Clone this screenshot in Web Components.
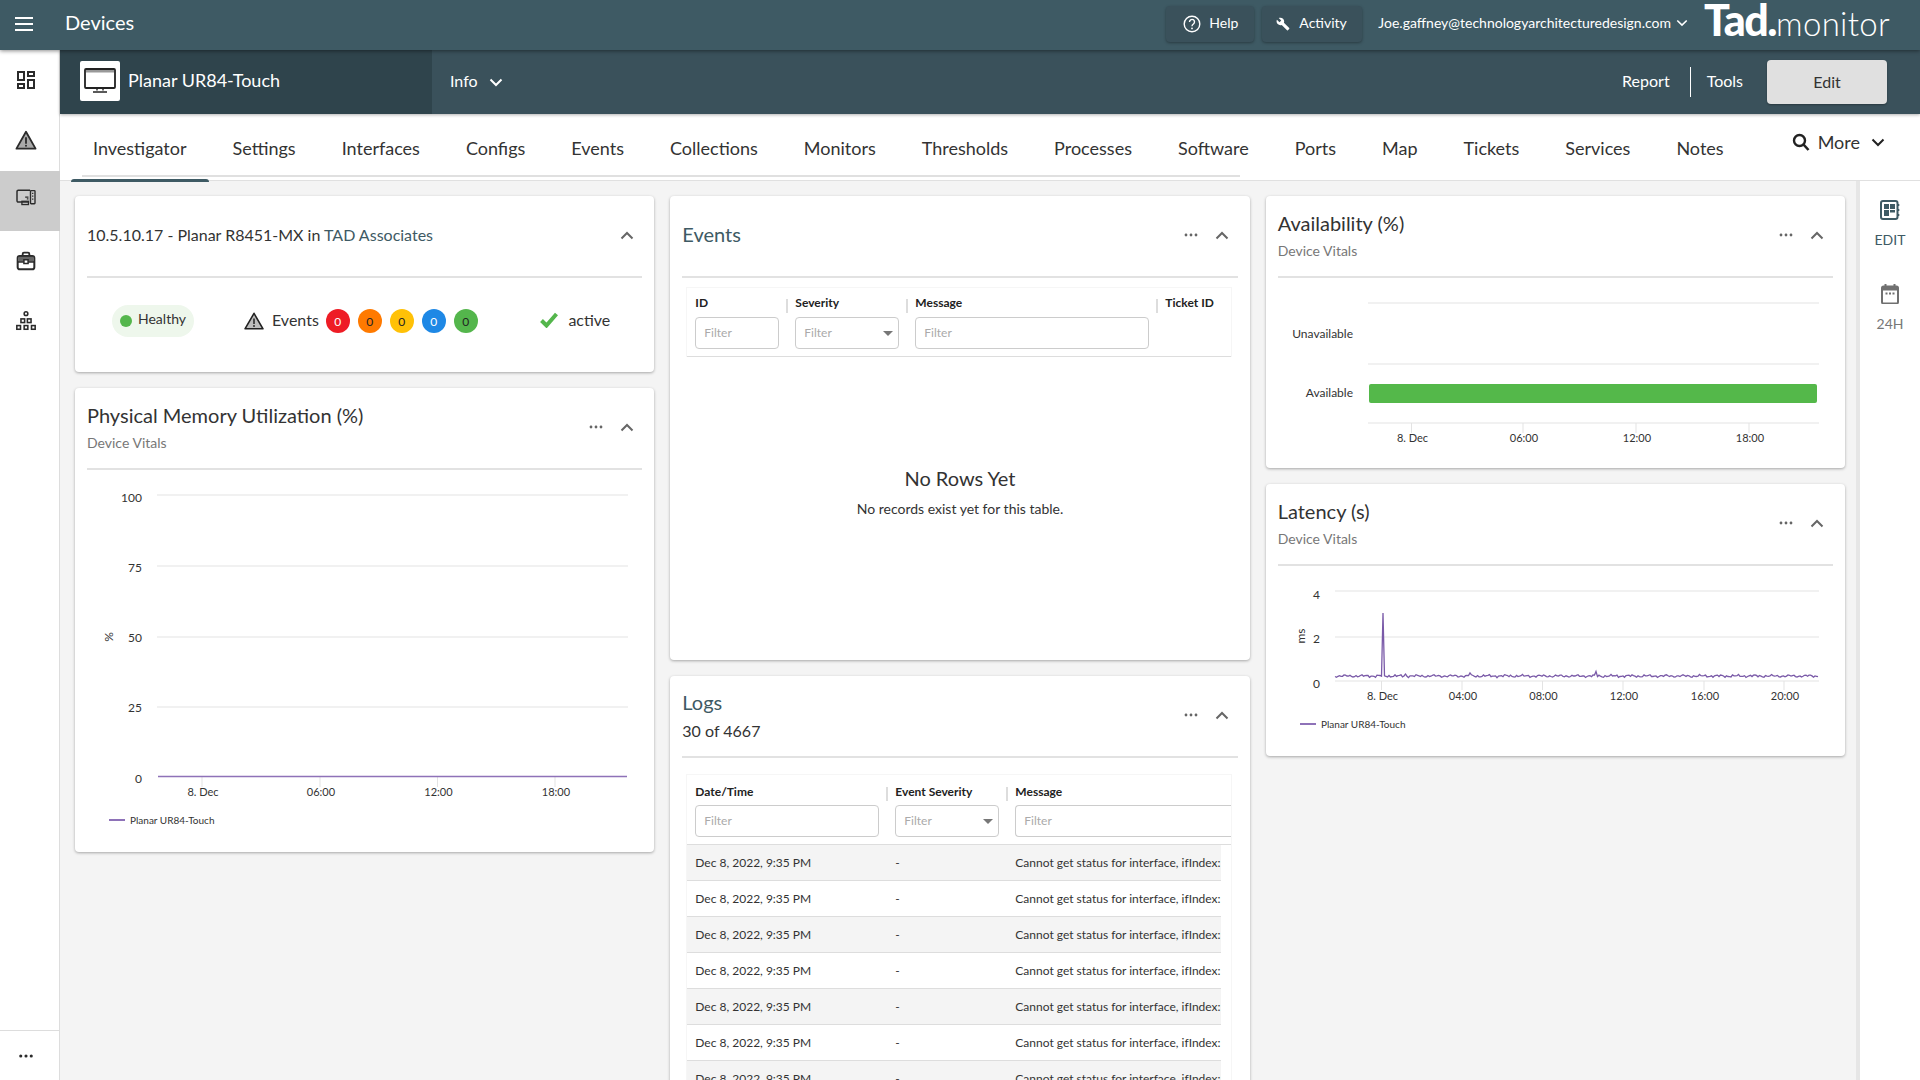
<!DOCTYPE html>
<html lang="en"><head><meta charset="utf-8"><title>Devices</title>
<style>
html,body{margin:0;padding:0;height:1080px;overflow:hidden;background:#f4f4f4;font-family:"Lato","Liberation Sans",sans-serif;color:#333}
#shell{display:flex;flex-direction:column;height:1080px;overflow:hidden}
#below{display:flex;flex:1;min-height:0}
#mainarea{display:flex;flex-direction:column;flex:1;min-width:0}
#work{display:flex;flex:1;min-height:0}
a{color:#3e5a64;text-decoration:none}
</style></head>
<body>
<div id="shell">
  <tm-topbar></tm-topbar>
  <div id="below">
    <tm-sidebar></tm-sidebar>
    <div id="mainarea">
      <tm-subheader></tm-subheader>
      <tm-tabs>
        <tm-tab active>Investigator</tm-tab><tm-tab>Settings</tm-tab><tm-tab>Interfaces</tm-tab><tm-tab>Configs</tm-tab><tm-tab>Events</tm-tab><tm-tab>Collections</tm-tab><tm-tab>Monitors</tm-tab><tm-tab>Thresholds</tm-tab><tm-tab>Processes</tm-tab><tm-tab>Software</tm-tab><tm-tab>Ports</tm-tab><tm-tab>Map</tm-tab><tm-tab>Tickets</tm-tab><tm-tab>Services</tm-tab><tm-tab>Notes</tm-tab>
      </tm-tabs>
      <div id="work">
        <tm-columns>
          <tm-column>
            <tm-card style="height:176px" plain>
              <span slot="title" style="font-size:16px;color:#333">10.5.10.17 - Planar R8451-MX in <a>TAD Associates</a></span>
              <tm-status></tm-status>
            </tm-card>
            <tm-card style="height:464px">
              <span slot="title">Physical Memory Utilization (%)</span><span slot="sub">Device Vitals</span>
              <tm-chart kind="memory"></tm-chart>
            </tm-card>
          </tm-column>
          <tm-column>
            <tm-card style="height:464px" accent>
              <span slot="title">Events</span>
              <tm-table kind="events"></tm-table>
              <tm-empty></tm-empty>
            </tm-card>
            <tm-card style="height:464px" accent>
              <span slot="title">Logs</span><span slot="sub" style="color:#333;font-size:16px;display:block;margin:1px 0 1px">30 of 4667</span>
              <tm-table kind="logs"></tm-table>
            </tm-card>
          </tm-column>
          <tm-column>
            <tm-card style="height:272px">
              <span slot="title">Availability (%)</span><span slot="sub">Device Vitals</span>
              <tm-chart kind="availability"></tm-chart>
            </tm-card>
            <tm-card style="height:272px">
              <span slot="title">Latency (s)</span><span slot="sub">Device Vitals</span>
              <tm-chart kind="latency"></tm-chart>
            </tm-card>
          </tm-column>
        </tm-columns>
        <tm-rail></tm-rail>
      </div>
    </div>
  </div>
</div>
<script>
function shadow(el, html){ el.attachShadow({mode:'open'}).innerHTML = html; }
const chev = (c,w=2)=>`<svg width="14" height="9" viewBox="0 0 14 9"><path d="M1.5 1.5 7 7l5.5-5.5" fill="none" stroke="${c}" stroke-width="${w}"/></svg>`;
const chevUp = (c,w=2)=>`<svg width="14" height="9" viewBox="0 0 14 9"><path d="M1.5 7.5 7 2l5.5 5.5" fill="none" stroke="${c}" stroke-width="${w}"/></svg>`;

customElements.define('tm-topbar', class extends HTMLElement{ connectedCallback(){ shadow(this,`
<style>
:host{display:flex;align-items:center;height:50px;background:#3e5a64;color:#fff;position:relative;z-index:3;box-shadow:0 1px 4px rgba(0,0,0,.45);flex:none}
.burger{width:18px;margin:-2px 0 0 15px;display:flex;flex-direction:column;gap:4px}
.burger i{display:block;height:2px;background:#fff}
.name{font-size:20px;margin-left:32px;padding-bottom:6px}
.right{margin-left:auto;display:flex;align-items:center}
.btn{display:flex;align-items:center;height:36px;box-sizing:border-box;background:#3a515b;border-radius:4px;box-shadow:0 1px 3px rgba(0,0,0,.35);font-size:14px;gap:8px;margin:-2px 8px 0 0}
.btn span{padding-bottom:4px}
.help{width:88px;padding-left:17px}
.act{width:100px;padding-left:14px;margin-right:16px;gap:9px}
.mail{font-size:14px;white-space:nowrap;padding-bottom:6px}
.dd{margin:-4px 16px 0 5px;display:flex}
.logo{display:flex;align-items:baseline;margin-right:30px;line-height:1;height:42px;margin-top:-12px}
.tad{font-size:43px;font-weight:900;letter-spacing:-1.5px}
.mon{font-size:33px;font-weight:300;letter-spacing:.3px}
</style>
<div class="burger"><i></i><i></i><i></i></div>
<div class="name">Devices</div>
<div class="right">
 <div class="btn help"><svg width="18" height="18" viewBox="0 0 18 18"><circle cx="9" cy="9" r="7.8" fill="none" stroke="#fff" stroke-width="1.4"/><path d="M6.5 7a2.5 2.5 0 1 1 3.9 2c-.9.6-1.4 1-1.4 2.2" fill="none" stroke="#fff" stroke-width="1.4"/><circle cx="9" cy="13.4" r=".9" fill="#fff"/></svg><span>Help</span></div>
 <div class="btn act"><svg width="14" height="14" viewBox="0 0 24 24"><path fill="#fff" d="M22.7,19L13.6,9.9C14.5,7.6 14,4.9 12.1,3C10.1,1 7.1,0.6 4.7,1.7L9,6L6,9L1.6,4.7C0.4,7.1 0.9,10.1 2.9,12.1C4.8,14 7.5,14.5 9.8,13.6L18.9,22.7C19.3,23.1 19.9,23.1 20.3,22.7L22.6,20.4C23.1,20 23.1,19.3 22.7,19Z"/></svg><span>Activity</span></div>
 <div class="mail">Joe.gaffney@technologyarchitecturedesign.com</div>
 <div class="dd">${chev('#fff',1.8).replace('width="14" height="9"','width="12" height="8"')}</div>
 <div class="logo"><span class="tad">Tad.</span><span class="mon">monitor</span></div>
</div>`);}});

customElements.define('tm-sidebar', class extends HTMLElement{ connectedCallback(){ const d='#2b2b2b'; shadow(this,`
<style>
:host{display:flex;flex-direction:column;width:60px;box-sizing:border-box;background:#fff;border-right:1px solid #ddd;flex:none;height:1030px}
.i{height:60px;display:flex;align-items:center;justify-content:center;padding-right:8px;box-sizing:border-box}
.on{background:#ccc;margin:1px -1px 0 0;padding:0 9px 6px 0}
.more{margin-top:auto;height:50px;border-top:1px solid #ddd;padding-right:7px}
</style>
<div class="i"><svg width="24" height="24" viewBox="0 0 24 24"><path fill="${d}" d="M19,5V7H15V5H19M9,5V11H5V5H9M19,13V19H15V13H19M9,17V19H5V17H9M21,3H13V9H21V3M11,3H3V13H11V3M21,11H13V21H21V11M11,15H3V21H11V15Z"/></svg></div>
<div class="i"><svg width="22" height="20" viewBox="0 0 24 22"><path d="M12 2 22.5 20.5H1.5Z" fill="#a9a9a9" stroke="${d}" stroke-width="2" stroke-linejoin="round"/><path d="M12 8v7" stroke="${d}" stroke-width="2"/><circle cx="12" cy="17.4" r="1.1" fill="${d}"/></svg></div>
<div class="i on"><svg width="20" height="18" viewBox="0 0 24 22"><path d="M15 16H2.5a1.5 1.5 0 0 1-1.5-1.5V3A1.5 1.5 0 0 1 2.5 1.5H17" fill="none" stroke="${d}" stroke-width="1.8"/><rect x="17.5" y="2" width="5.5" height="16" rx=".8" fill="none" stroke="${d}" stroke-width="1.7"/><path d="M20.2 4.5v1.5M20.2 8v1.5M20.2 11.5v1.5" stroke="${d}" stroke-width="1.6"/><rect x="7" y="15" width="8" height="4" fill="none" stroke="${d}" stroke-width="1.6"/><path d="M11 10h4M13 12h2" stroke="${d}" stroke-width="1.4"/></svg></div>
<div class="i"><svg width="20" height="20" viewBox="0 0 24 24"><path d="M8 6V3.5A1.5 1.5 0 0 1 9.5 2h5A1.5 1.5 0 0 1 16 3.5V6" fill="none" stroke="${d}" stroke-width="2.2"/><rect x="2" y="6" width="20" height="16" rx="2.5" fill="none" stroke="${d}" stroke-width="2.4"/><path d="M2 13h20" stroke="${d}" stroke-width="2.2"/><rect x="3" y="7" width="18" height="5.5" fill="#666"/><rect x="9.5" y="10.5" width="5" height="4.5" fill="#fff" stroke="${d}" stroke-width="1.8"/></svg></div>
<div class="i"><svg width="22" height="22" viewBox="0 0 24 24"><g fill="none" stroke="${d}" stroke-width="1.7"><circle cx="12" cy="4" r="2"/><rect x="6.5" y="9.7" width="4" height="4"/><rect x="13.5" y="9.7" width="4" height="4"/><rect x="2" y="17" width="4" height="4"/><rect x="10" y="17" width="4" height="4"/><rect x="18" y="17" width="4" height="4"/></g></svg></div>
<div class="i more"><svg width="14" height="4" viewBox="0 0 16 4"><circle cx="2" cy="2" r="1.8" fill="${d}"/><circle cx="8" cy="2" r="1.8" fill="${d}"/><circle cx="14" cy="2" r="1.8" fill="${d}"/></svg></div>`);}});

customElements.define('tm-subheader', class extends HTMLElement{ connectedCallback(){ shadow(this,`
<style>
:host{display:flex;align-items:center;height:64px;background:#3a515b;color:#fff;flex:none;position:relative;z-index:2;box-shadow:0 1px 3px rgba(0,0,0,.3)}
.id{width:372px;height:64px;box-sizing:border-box;background:#2f444c;display:flex;align-items:center;padding-left:20px;gap:8px;font-size:18px;padding-bottom:2px}
.id span{padding-bottom:3px}
.box{width:40px;height:40px;background:#fff;border-radius:2px;display:flex;align-items:center;justify-content:center}
.info{margin-left:18px;font-size:16px;display:flex;align-items:center;gap:11px}
.info span{padding-bottom:4px}
.r{margin-left:auto;display:flex;align-items:center;font-size:16px}
.r>span{padding-bottom:4px}
.sep{width:1px;height:30px;background:#fff;margin:0 16px 0 20px}
.edit{margin:0 33px 0 24px;width:120px;height:44px;padding-bottom:2px;box-sizing:border-box;background:#e0e0e0;color:#333;border-radius:4px;display:flex;align-items:center;justify-content:center;box-shadow:0 1px 2px rgba(0,0,0,.3)}
</style>
<div class="id"><div class="box"><svg width="32" height="26" viewBox="0 0 32 26"><rect x="1" y="1" width="30" height="19" rx="1" fill="#fff" stroke="#222" stroke-width="1.8"/><rect x="2" y="2" width="28" height="2.5" fill="#999"/><path d="M13 20.5v2M19 20.5v2" stroke="#222" stroke-width="1.4"/><path d="M9 24h14" stroke="#222" stroke-width="1.5"/></svg></div><span>Planar UR84-Touch</span></div>
<div class="info"><span>Info</span> ${chev('#fff')}</div>
<div class="r"><span>Report</span><i class="sep"></i><span>Tools</span><div class="edit">Edit</div></div>`);}});

customElements.define('tm-tabs', class extends HTMLElement{ connectedCallback(){ shadow(this,`
<style>
:host{display:flex;height:67px;box-sizing:border-box;background:#fff;border-bottom:1px solid #e0e0e0;flex:none;position:relative}
.track{box-sizing:border-box;width:1158px;height:63px;margin-left:22px;border-bottom:2px solid #e0e0e0;display:flex;flex:none}
.inner{display:flex;gap:2px;margin-left:-11px}
.more{margin-left:auto;margin-right:35px;display:flex;align-items:center;height:56px;gap:8px;font-size:18px;color:#333}
</style>
<div class="track"><div class="inner"><slot></slot></div></div>
<div class="more"><svg width="18" height="18" viewBox="0 0 18 18"><circle cx="7.5" cy="7.5" r="5.5" fill="none" stroke="#222" stroke-width="2.4"/><path d="M11.5 11.5 16.5 17" stroke="#222" stroke-width="2.6"/></svg><span>More</span><span style="margin-left:3px;display:flex">${chev('#222')}</span></div>`);}});

customElements.define('tm-tab', class extends HTMLElement{ connectedCallback(){ shadow(this,`
<style>
:host{display:block;position:relative;padding:23px 22px 0;font-size:18px;line-height:22px;white-space:nowrap;color:#333;height:38px;flex:none}
:host([active])::after{content:"";position:absolute;left:0;right:0;bottom:-7px;height:3px;background:#3e5a64;border-radius:3px 3px 0 0}
</style><slot></slot>`);}});

customElements.define('tm-columns', class extends HTMLElement{ connectedCallback(){ shadow(this,`
<style>
:host{display:grid;grid-template-columns:repeat(3,1fr);column-gap:16px;flex:1;min-width:0;padding:15px 11px 0 15px;align-items:start;overflow:hidden;box-sizing:border-box;border-right:4px solid #e6e6e6}
</style><slot></slot>`);}});

customElements.define('tm-column', class extends HTMLElement{ connectedCallback(){ shadow(this,`
<style>:host{display:flex;flex-direction:column;gap:16px;min-width:0}</style><slot></slot>`);}});

customElements.define('tm-card', class extends HTMLElement{ connectedCallback(){ shadow(this,`
<style>
:host{display:flex;flex-direction:column;flex:none;background:#fff;border-radius:4px;box-shadow:0 1px 3px rgba(0,0,0,.32);box-sizing:border-box;overflow:hidden}
.h{flex:none;height:82px;box-sizing:border-box;margin:0 12px;border-bottom:2px solid #e2e2e2;display:flex;align-items:center}
.t{flex:1;min-width:0;display:flex;flex-direction:column;gap:5px}
.tt{font-size:20px;line-height:24px;color:#333;margin:-2px 0 2px}
:host([accent]) .tt{color:#3e5a64}
.st{font-size:14px;line-height:18px;color:#777}
.a{display:flex;align-items:center;flex:none;margin-top:-2px}
.a span{width:31px;display:flex;justify-content:center}
.b{flex:1;min-height:0;position:relative;overflow:hidden}
</style>
<div class="h"><div class="t"><div class="tt"><slot name="title"></slot></div><div class="st"><slot name="sub"></slot></div></div>
<div class="a">${this.hasAttribute('plain')?'':'<span><svg width="14" height="4" viewBox="0 0 14 4"><circle cx="2" cy="2" r="1.4" fill="#666"/><circle cx="7" cy="2" r="1.4" fill="#666"/><circle cx="12" cy="2" r="1.4" fill="#666"/></svg></span>'}<span>${chevUp('#666')}</span></div></div>
<div class="b"><slot></slot></div>`);
 if(!this.querySelector('[slot=sub]')) this.shadowRoot.querySelector('.st').style.display='none';
}});

customElements.define('tm-status', class extends HTMLElement{ connectedCallback(){
 const dots=[['#ee1c25','#fff'],['#ff7a00','#222'],['#ffc107','#222'],['#1e88e5','#fff'],['#54b64c','#222']];
 shadow(this,`
<style>
:host{display:flex;align-items:center;height:94px;padding:0 44px 8px 37px;box-sizing:border-box;font-size:16px;color:#333}
.pill{display:flex;align-items:center;gap:6px;width:82px;height:32px;padding-left:8px;box-sizing:border-box;border-radius:16px;background:#eef7ec;font-size:14px}
.pill i{width:12px;height:12px;border-radius:50%;background:#54b64c}
.pill span{padding-bottom:5px}
.ev{display:flex;align-items:center;margin-left:50px}
.ev span{margin:0 7px 0 8px;padding-bottom:3px}
.ev b{display:flex;width:24px;height:24px;border-radius:50%;align-items:center;justify-content:center;font-size:12px;font-weight:400;margin-right:8px}
.ac{margin-left:auto;display:flex;align-items:center;gap:10px}
.ac svg{margin-bottom:2px}
.ac span{padding-bottom:3px}
</style>
<div class="pill"><i></i><span>Healthy</span></div>
<div class="ev"><svg width="20" height="18" viewBox="0 0 20 18"><path d="M10 1.3 19 16.8H1Z" fill="#bdbdbd" stroke="#222" stroke-width="1.6" stroke-linejoin="round"/><path d="M10 6.5v5.5" stroke="#222" stroke-width="1.5"/><circle cx="10" cy="14" r=".9" fill="#222"/></svg><span>Events</span>${dots.map(d=>`<b style="background:${d[0]};color:${d[1]}">0</b>`).join('')}</div>
<div class="ac"><svg width="18" height="16" viewBox="0 0 18 16"><path d="M1.5 8.5 6.5 13.5 16.5 2" fill="none" stroke="#54b64c" stroke-width="4"/></svg><span>active</span></div>`);}});

customElements.define('tm-table', class extends HTMLElement{ connectedCallback(){
 const ev=this.getAttribute('kind')==='events';
 const cols=ev?[['ID',100,'i'],['Severity',120,'s'],['Message',250,'i'],['Ticket ID',76,'']]:[['Date/Time',200,'i'],['Event Severity',120,'s'],['Message',226,'o']];
 const cell=(c,i)=>`<div class="c" style="width:${c[1]}px">${i?'<i class="bar"></i>':''}<div class="l">${c[0]}</div>${c[2]==='i'?'<div class="f">Filter</div>':c[2]==='o'?'<div class="f over">Filter</div>':c[2]==='s'?'<div class="f sel">Filter<svg width="10" height="5" viewBox="0 0 10 5"><path d="M0 0h10L5 5Z" fill="#777"/></svg></div>':''}</div>`;
 let rows='';
 if(!ev) for(let n=0;n<7;n++) rows+=`<div class="r ${n%2?'':'alt'}"><span style="width:200px">Dec 8, 2022, 9:35 PM</span><span style="width:120px">-</span><span class="m">Cannot get status for interface, ifIndex:</span></div>`;
 shadow(this,`
<style>
:host{display:block;margin:${ev?9:16}px 18px 0 16px;border:1px solid #f6f6f6;border-bottom:0;font-size:12px;color:#333;overflow:hidden}
.hd{display:flex;height:${ev?69:70}px;box-sizing:border-box;border-bottom:1px solid #ddd}
.c{position:relative;box-sizing:border-box;padding:${ev?7:8.5}px 0 0 8px;flex:none}
.l{font-weight:700;line-height:16px;color:#222;white-space:nowrap}
.bar{position:absolute;left:-1px;top:${ev?11:12}px;width:2px;height:14px;background:#ddd}
.f{box-sizing:border-box;height:32px;margin:${ev?6:5.5}px 8px 0 0;border:1px solid #ccc;border-radius:4px;color:#aaa;padding-left:8px;line-height:30px;position:relative;background:#fff}
.over{margin-right:-8px;border-right:0;border-radius:4px 0 0 4px}
.sel svg{position:absolute;right:5px;top:13px}
.r{display:flex;width:534px;height:36px;box-sizing:border-box;align-items:center;border-bottom:1px solid #ddd;padding-left:8px;background:#fff}
.alt{background:#f4f4f4}
.r span{flex:none;white-space:nowrap}
.r .m{width:206px}
</style>
<div class="hd">${cols.map(cell).join('')}</div>${rows}`);}});

customElements.define('tm-empty', class extends HTMLElement{ connectedCallback(){ shadow(this,`
<style>:host{display:block;text-align:center;margin-top:109px;color:#333}
.a{font-size:20px;line-height:24px}.b{font-size:14px;line-height:18px;margin-top:10px}</style>
<div class="a">No Rows Yet</div><div class="b">No records exist yet for this table.</div>`);}});

customElements.define('tm-chart', class extends HTMLElement{ connectedCallback(){
 const kind=this.getAttribute('kind');
 const grid='#e3e3e3', t='#333';
 const cfg={
  memory:{ox:75,oy:470,h:382,gx:[157,628],gy:[495,566,637,707],base:777,
    yl:[['100',497],['75',567],['50',637],['25',707],['0',778]],ylx:142,fs:12,
    ticks:[[202,'8. Dec'],[320,'06:00'],[437.5,'12:00'],[555,'18:00']],tickY:[777,787],labY:791.5,
    unit:['%',108,637],legend:[109,820]},
  availability:{ox:1266,oy:278,h:190,gx:[1368,1819],gy:[303,364,423],base:null,
    yl:[['Unavailable',333.5],['Available',392.5]],ylx:1353,fs:12,
    ticks:[[1411.5,'8. Dec'],[1523,'06:00'],[1636,'12:00'],[1749,'18:00']],tickY:[423,433],labY:437},
  latency:{ox:1266,oy:566,h:190,gx:[1335,1819],gy:[591,637,681],base:null,
    yl:[['4',594],['2',638],['0',683]],ylx:1320,fs:12,
    ticks:[[1381.5,'8. Dec'],[1462,'04:00'],[1542.5,'08:00'],[1623,'12:00'],[1704,'16:00'],[1784,'20:00']],tickY:[681,690],labY:695,
    unit:['ms',1300,636],legend:[1300,724]}
 }[kind];
 const X=x=>(x-cfg.ox).toFixed(1), Y=y=>(y-cfg.oy).toFixed(1);
 let s='';
 cfg.gy.forEach(y=>s+=`<line x1="${X(cfg.gx[0])}" x2="${X(cfg.gx[1])}" y1="${Y(y)}" y2="${Y(y)}" stroke="${grid}"/>`);
 cfg.ticks.forEach(k=>{s+=`<line x1="${X(k[0])}" x2="${X(k[0])}" y1="${Y(cfg.tickY[0])}" y2="${Y(cfg.tickY[1])}" stroke="${grid}"/>`;
   s+=`<text x="${X(k[0]+1)}" y="${Y(cfg.labY)}" text-anchor="middle" dominant-baseline="central" font-size="11" fill="${t}">${k[1]}</text>`;});
 cfg.yl.forEach(l=>s+=`<text x="${X(cfg.ylx)}" y="${Y(l[1])}" text-anchor="end" dominant-baseline="central" font-size="${cfg.fs}" fill="${t}">${l[0]}</text>`);
 if(cfg.unit) s+=`<text transform="translate(${X(cfg.unit[1])} ${Y(cfg.unit[2])}) rotate(-90)" text-anchor="middle" dominant-baseline="central" font-size="12" fill="${t}">${cfg.unit[0]}</text>`;
 if(cfg.legend){const[lx,ly]=cfg.legend; s+=`<line x1="${X(lx)}" x2="${X(lx+16)}" y1="${Y(ly)}" y2="${Y(ly)}" stroke="#8e72b8" stroke-width="2"/><text x="${X(lx+21)}" y="${Y(ly)}" dominant-baseline="central" font-size="10" fill="${t}">Planar UR84-Touch</text>`;}
 if(kind==='memory') s+=`<line x1="${X(158)}" x2="${X(627)}" y1="${Y(776.5)}" y2="${Y(776.5)}" stroke="#8e72b8" stroke-width="1.5"/>`;
 if(kind==='availability') s+=`<rect x="${X(1369)}" y="${Y(384)}" width="448" height="19" rx="2" fill="#54b84a"/>`;
 if(kind==='latency'){
   let d=[],x=1335,i=0;
   while(x<=1819){
     let y=676+Math.sin(i*1.7)*.7+Math.sin(i*.53+1)*.6+Math.sin(i*3.1)*.4;
     if(Math.abs(x-1382.5)<1) y=613;
     if(Math.abs(x-1405)<1) y=674;
     if(Math.abs(x-1470)<1) y=673;
     if(Math.abs(x-1596)<1) y=671.5;
     d.push((i?'L':'M')+X(x)+' '+Y(y)); x+=1.5;i++;
   }
   s+=`<path d="${d.join('')}" fill="none" stroke="#7a5aa8" stroke-width="1.3"/>`;
 }
 shadow(this,`<style>:host{display:block;height:${cfg.h}px}svg{display:block;font-family:"Lato","Liberation Sans",sans-serif}</style><svg width="579" height="${cfg.h}">${s}</svg>`);}});

customElements.define('tm-rail', class extends HTMLElement{ connectedCallback(){ shadow(this,`
<style>
:host{display:flex;flex-direction:column;align-items:center;width:60px;flex:none;background:#fff;box-sizing:border-box;padding-top:19px;font-size:14px}
.e{color:#3e5a64;display:flex;flex-direction:column;align-items:center;gap:11px}
.c{color:#777;display:flex;flex-direction:column;align-items:center;gap:11px;margin-top:36px}
</style>
<div class="e"><svg width="20" height="20" viewBox="0 0 20 20"><rect x="1" y="1" width="16.5" height="18" rx="2" fill="none" stroke="#3e5a64" stroke-width="2"/><rect x="4" y="4" width="5" height="5" fill="#3e5a64"/><rect x="10" y="4" width="5" height="5" fill="#3e5a64"/><rect x="4" y="10" width="5" height="6" fill="#3e5a64"/><rect x="10" y="10" width="5" height="2.5" fill="#3e5a64"/><path d="M18.5 4v2M18.5 9v2M18.5 14v2" stroke="#3e5a64" stroke-width="1.6"/></svg>EDIT</div>
<div class="c"><svg width="18" height="20" viewBox="0 0 18 20"><rect x="1" y="2.5" width="16" height="17" rx="1.5" fill="#fff" stroke="#707070" stroke-width="2"/><rect x="1" y="2.5" width="16" height="4" fill="#707070"/><path d="M4.5 0v3M13.5 0v3" stroke="#707070" stroke-width="2"/><path d="M4.5 9.5h2M8 9.5h2M11.5 9.5h2" stroke="#707070" stroke-width="1.8"/></svg>24H</div>`);}});
</script>
</body></html>
